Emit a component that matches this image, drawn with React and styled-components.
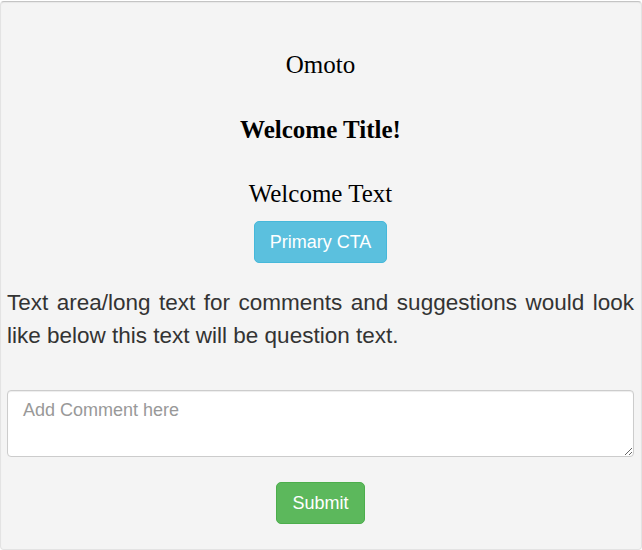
import styled, { createGlobalStyle } from "styled-components";

const GlobalStyle = createGlobalStyle`
   * {
      box-sizing: border-box;
   }

   body {
      margin: 0;
      background: #ffffff;
      font-family: "Liberation Sans", Arial, sans-serif;
   }
`;

const Well = styled.div`
   margin-top: 1px;
   min-height: 549px;
   padding: 49px 7px 24px 6px;
   background-color: #f4f4f4;
   border: 1px solid #e3e3e3;
   border-top-color: #c4c4c4;
   border-radius: 4px;
   box-shadow: inset 0 1px 1px rgba(0, 0, 0, 0.05);
   display: flex;
   flex-direction: column;
   align-items: center;
`;

const Heading = styled.div`
   font-family: "Liberation Serif", "Times New Roman", serif;
   font-size: 25px;
   line-height: 28px;
   color: #000;
   font-weight: ${({ $bold }) => ($bold ? 700 : 400)};
   margin-top: ${({ $gap }) => $gap}px;
   text-align: center;
`;

const Button = styled.button`
   margin-top: ${({ $gap }) => $gap}px;
   padding: 8px 15px;
   font-family: "Liberation Sans", Arial, sans-serif;
   font-size: 18px;
   line-height: 24px;
   color: #fff;
   border: 1px solid ${({ $border }) => $border};
   background-color: ${({ $bg }) => $bg};
   border-radius: 5px;
   cursor: pointer;
`;

const Question = styled.p`
   align-self: stretch;
   margin: 23px 0 0;
   font-size: 22.5px;
   line-height: 33px;
   color: #333;
   text-align: justify;
`;

const Comment = styled.textarea`
   align-self: stretch;
   margin-top: 38px;
   height: 67px;
   padding: 7px 15px;
   font-family: "Liberation Sans", Arial, sans-serif;
   font-size: 18px;
   line-height: 24px;
   color: #555;
   background: #fff;
   border: 1px solid #ccc;
   border-radius: 4px;
   box-shadow: inset 0 1px 1px rgba(0, 0, 0, 0.075);
   resize: vertical;

   &::placeholder {
      color: #999;
   }
`;

const App = () => {
   return (
      <>
         <GlobalStyle />
         <Well>
            <Heading>Omoto</Heading>
            <Heading $bold $gap={37}>Welcome Title!</Heading>
            <Heading $gap={36}>Welcome Text</Heading>
            <Button $gap={13} $bg="#5bc0de" $border="#46b8da">Primary CTA</Button>
            <Question>
               Text area/long text for comments and suggestions would look like below this text will be question text.
            </Question>
            <Comment placeholder="Add Comment here" />
            <Button $gap={25} $bg="#5cb85c" $border="#4cae4c">Submit</Button>
         </Well>
      </>
   );
};

export default App;
